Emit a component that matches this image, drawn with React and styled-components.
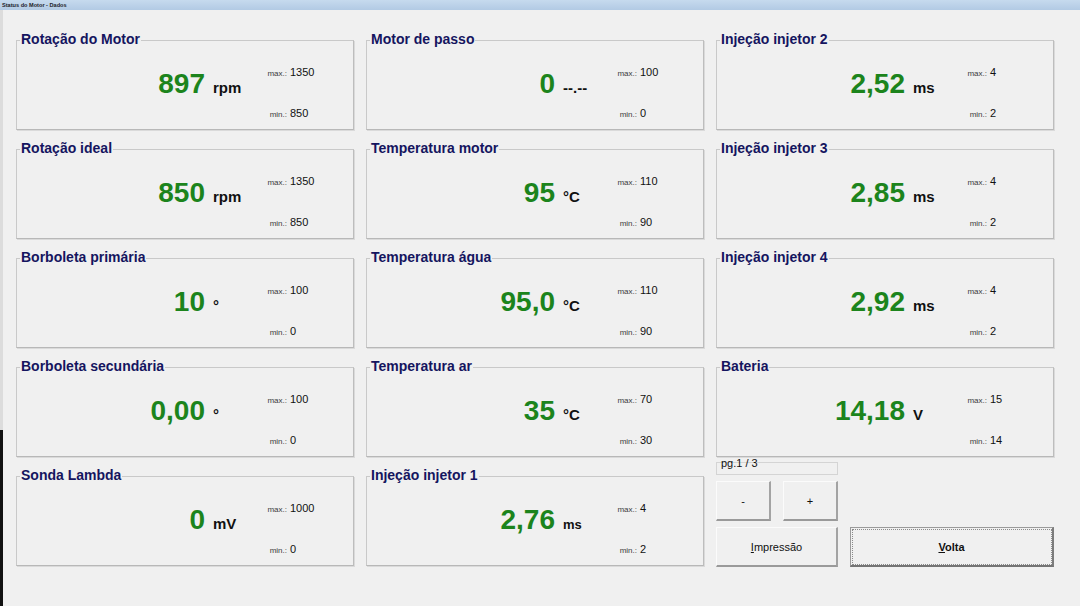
import React from "react";
import styled, { createGlobalStyle } from "styled-components";

const GlobalStyle = createGlobalStyle`
  html, body { margin: 0; padding: 0; background: #f0f0f0; }
  body { font-family: "Liberation Sans", Arial, sans-serif; }
  #root { width: 1080px; height: 606px; overflow: hidden; }
  * { box-sizing: border-box; }
`;

const Window = styled.div`
  width: 1080px;
  height: 606px;
  display: flex;
  flex-direction: column;
  background: #f0f0f0;
`;

const TitleBar = styled.div`
  flex: none;
  height: 10px;
  padding-left: 2px;
  background: linear-gradient(#c6daee, #b2cae4);
  font-size: 5.6px;
  font-weight: bold;
  line-height: 10px;
  color: #1c1c28;
  white-space: nowrap;
`;

const Main = styled.div`
  flex: 1;
  display: flex;
`;

const Edge = styled.div`
  flex: none;
  width: 3px;
  background: linear-gradient(to bottom, #dcdcdc 0, #dcdcdc 420px, #111 420px, #111 100%);
`;

const Grid = styled.div`
  display: grid;
  grid-template-columns: repeat(3, 338px);
  grid-auto-rows: 90px;
  column-gap: 12px;
  row-gap: 19px;
  align-content: start;
  padding: 30px 0 0 13px;
`;

const Panel = styled.div`
  position: relative;
  display: flex;
  border: 1px solid #c9c9c9;
  border-right-color: #bdbdbd;
  border-bottom-color: #b8b8b8;
  box-shadow: 1px 1px 0 #dadada;
`;

const PanelTitle = styled.span`
  position: absolute;
  top: -10px;
  left: 3px;
  padding: 0 1px;
  background: #f0f0f0;
  font-size: 14px;
  font-weight: bold;
  line-height: 16px;
  color: #15155f;
  white-space: nowrap;
`;

const Reading = styled.div`
  flex: 0 0 249px;
  display: flex;
  align-items: baseline;
  padding-top: 29px;
`;

const Number = styled.span`
  flex: 0 0 188px;
  text-align: right;
  font-size: 28px;
  font-weight: bold;
  line-height: 28px;
  color: #1c841c;
`;

const Unit = styled.span`
  margin-left: 8px;
  font-size: ${(p) => p.$size || 15}px;
  font-weight: bold;
  color: #111;
  white-space: nowrap;
`;

const Limits = styled.div`
  display: flex;
  flex-direction: column;
  gap: 27px;
  padding-top: 25px;
`;

const LimitRow = styled.div`
  display: flex;
  align-items: baseline;
  font-size: 11px;
  line-height: 12px;
`;

const LimitLabel = styled.span`
  flex: 0 0 21px;
  text-align: right;
  font-size: 8px;
  color: #3c3c3c;
`;

const LimitValue = styled.span`
  margin-left: 3px;
  color: #111;
`;

const Controls = styled.div`
  align-self: start;
  margin-top: -14px;
  display: grid;
  grid-template-columns: 55px 55px 1fr;
  grid-template-rows: 13px 40px 40px;
  column-gap: 12px;
  row-gap: 6px;
`;

const PageBox = styled.div`
  grid-column: 1 / 3;
  grid-row: 1;
  position: relative;
  border: 1px solid #d4d4d4;
`;

const PageLabel = styled.span`
  position: absolute;
  top: -6px;
  left: 4px;
  font-size: 11px;
  line-height: 12px;
  color: #111;
  white-space: nowrap;
`;

const Button = styled.button`
  grid-column: ${(p) => p.$col};
  grid-row: ${(p) => p.$row};
  margin: 0;
  padding: 0;
  font-family: "Liberation Sans", Arial, sans-serif;
  font-size: 11px;
  font-weight: ${(p) => (p.$default ? "bold" : "normal")};
  color: #111;
  background: #f0f0f0;
  border-style: solid;
  border-width: 1px 2px 2px 1px;
  border-color: ${(p) =>
    p.$default ? "#9a9a9a #7c7c7c #747474 #9a9a9a" : "#fbfbfb #a3a3a3 #9a9a9a #fbfbfb"};
  outline: ${(p) => (p.$default ? "1px dotted #8a8a8a" : "none")};
  outline-offset: -3px;
  cursor: default;
`;

const panels = [
  { title: "Rotação do Motor", value: "897", unit: "rpm", max: "1350", min: "850" },
  { title: "Motor de passo", value: "0", unit: "--.--", max: "100", min: "0" },
  { title: "Injeção injetor 2", value: "2,52", unit: "ms", max: "4", min: "2" },
  { title: "Rotação ideal", value: "850", unit: "rpm", max: "1350", min: "850" },
  { title: "Temperatura motor", value: "95", unit: "°C", max: "110", min: "90" },
  { title: "Injeção injetor 3", value: "2,85", unit: "ms", max: "4", min: "2" },
  { title: "Borboleta primária", value: "10", unit: "°", max: "100", min: "0" },
  { title: "Temperatura água", value: "95,0", unit: "°C", max: "110", min: "90" },
  { title: "Injeção injetor 4", value: "2,92", unit: "ms", max: "4", min: "2" },
  { title: "Borboleta secundária", value: "0,00", unit: "°", max: "100", min: "0" },
  { title: "Temperatura ar", value: "35", unit: "°C", max: "70", min: "30" },
  { title: "Bateria", value: "14,18", unit: "V", max: "15", min: "14" },
  { title: "Sonda Lambda", value: "0", unit: "mV", max: "1000", min: "0" },
  { title: "Injeção injetor 1", value: "2,76", unit: "ms", unitSize: 13, max: "4", min: "2" },
];

function Gauge({ title, value, unit, unitSize, max, min }) {
  return (
    <Panel>
      <PanelTitle>{title}</PanelTitle>
      <Reading>
        <Number>{value}</Number>
        <Unit $size={unitSize}>{unit}</Unit>
      </Reading>
      <Limits>
        <LimitRow>
          <LimitLabel>max.:</LimitLabel>
          <LimitValue>{max}</LimitValue>
        </LimitRow>
        <LimitRow>
          <LimitLabel>min.:</LimitLabel>
          <LimitValue>{min}</LimitValue>
        </LimitRow>
      </Limits>
    </Panel>
  );
}

export default function App() {
  return (
    <>
      <GlobalStyle />
      <Window>
        <TitleBar>Status do Motor - Dados</TitleBar>
        <Main>
          <Edge />
          <Grid>
            {panels.map((p) => (
              <Gauge key={p.title} {...p} />
            ))}
            <Controls>
              <PageBox>
                <PageLabel>pg.1 / 3</PageLabel>
              </PageBox>
              <Button $col="1" $row="2">-</Button>
              <Button $col="2" $row="2">+</Button>
              <Button $col="1 / 3" $row="3">
                <u>I</u>mpressão
              </Button>
              <Button $col="3" $row="3" $default>
                <u>V</u>olta
              </Button>
            </Controls>
          </Grid>
        </Main>
      </Window>
    </>
  );
}
